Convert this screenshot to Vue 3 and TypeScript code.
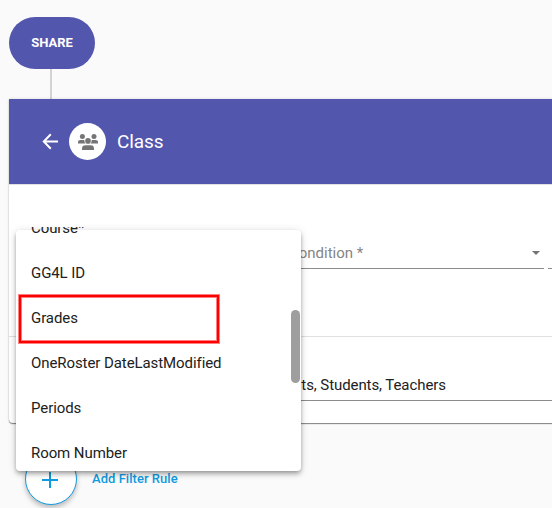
<script setup lang="ts">
const options: string[] = ['Course*', 'GG4L ID', 'Grades', 'OneRoster DateLastModified', 'Periods', 'Room Number']
</script>

<template>
  <main class="page">
    <button class="share">SHARE</button>
    <div class="connector"></div>
    <section class="card">
      <header class="card-header">
        <svg class="back" viewBox="0 0 17 17"><path d="M16 8.5H2M8.8 1.3 1.8 8.5 8.8 15.7" fill="none" stroke="#fff" stroke-width="2" /></svg>
        <span class="avatar">
          <svg width="20" height="16" viewBox="0 0 20 16" fill="#757575">
            <circle cx="4.4" cy="2.5" r="2.5" /><circle cx="16" cy="2.5" r="2.5" />
            <path d="M0 9.6V8.4Q0 6 2.6 6H5.6L6.4 6.3Q6.2 8.4 7.6 9.6ZM20 9.6V8.4Q20 6 17.4 6H14.4L13.6 6.3Q13.8 8.4 12.4 9.6Z" />
            <circle cx="10" cy="6.9" r="2.8" />
            <path d="M4 16V14.6Q4 11.2 7.5 11.2H12.5Q16 11.2 16 14.6V16Z" />
          </svg>
        </span>
        <h1>Class</h1>
      </header>
      <div class="rule-row">
        <div class="field condition"><span>Condition *</span><i class="caret"></i></div>
        <div class="field next"></div>
      </div>
      <div class="values-row"><div class="field values">Parents, Students, Teachers</div></div>
    </section>
    <div class="add-row">
      <button class="add"><svg width="16" height="16" viewBox="0 0 16 16"><path d="M8 0V16M0 8H16" stroke="#109be0" stroke-width="2" /></svg></button>
      <span class="add-label">Add Filter Rule</span>
    </div>
    <div class="menu">
      <ul>
        <li v-for="option in options" :key="option">{{ option }}</li>
      </ul>
      <div class="scroll-thumb"></div>
    </div>
    <div class="highlight"></div>
  </main>
</template>

<style>
body { background: #fafafa; overflow: hidden; }
</style>

<style scoped>
* { box-sizing: border-box; }
.page { position: relative; width: 552px; height: 508px; padding: 17px 0 0 9px; overflow: hidden; font: 15px Roboto, sans-serif; color: #212121; background: #fafafa; }
button { display: flex; align-items: center; justify-content: center; padding: 0; font-family: inherit; }
.share { width: 86px; height: 52px; padding-bottom: 1px; border: 0; border-radius: 26px; background: #5356ad; color: #fff; font-size: 13px; font-weight: 700; }
.connector { width: 2px; height: 30px; margin-left: 41px; background: #d3d3d3; }
.card { width: 560px; height: 324px; background: #fff; border-radius: 0 0 4px 4px; box-shadow: 0 1px 1px rgba(0,0,0,.45), 0 0 3px rgba(0,0,0,.15); }
.card-header { display: flex; align-items: center; height: 86px; padding-left: 33px; background: #5356ad; border-bottom: 1px solid #e0e0e0; }
.back { width: 17px; height: 17px; }
.avatar { display: flex; align-items: center; justify-content: center; width: 37px; height: 37px; margin-left: 10px; border-radius: 50%; background: #fff; }
h1 { margin: 0 0 0 11px; color: #fff; font-size: 19px; font-weight: 400; letter-spacing: -.1px; }
.rule-row { display: flex; gap: 4px; height: 152px; padding: 52px 0 0 280px; border-bottom: 1px solid #e0e0e0; }
.field { border-bottom: 1px solid #8c8c8c; }
.condition { display: flex; align-items: center; justify-content: space-between; width: 255px; height: 32px; padding-right: 4px; color: #858585; }
.caret { width: 0; height: 0; border: 4px solid transparent; border-top-color: #757575; border-bottom: 0; }
.next { width: 20px; height: 32px; }
.values-row { padding: 32px 0 0 16px; }
.values { height: 32px; padding-left: 238px; line-height: 32px; letter-spacing: -.08px; }
.add-row { display: flex; align-items: center; gap: 15px; margin: 30px 0 0 16px; color: #109be0; font-size: 13px; font-weight: 500; }
.add { width: 52px; height: 52px; padding: 2px 2px 0 0; border: 1px solid #109be0; border-radius: 50%; background: #fff; box-shadow: 0 3px 5px rgba(0,0,0,.25); }
.add-label { padding-bottom: 2px; letter-spacing: .04px; }
.menu { position: absolute; left: 16px; top: 230px; width: 285px; height: 241px; border-radius: 4px; background: #fff; box-shadow: 0 2px 4px -1px rgba(0,0,0,.3), 0 4px 5px rgba(0,0,0,.14), 0 1px 10px rgba(0,0,0,.12); }
ul { display: flex; flex-direction: column; justify-content: flex-end; height: 249px; margin: -3px 0 0; padding: 0; overflow: hidden; list-style: none; }
li { flex: none; height: 45px; padding-left: 15px; line-height: 45px; white-space: nowrap; letter-spacing: -.08px; }
.scroll-thumb { position: absolute; right: 1px; top: 80px; width: 9px; height: 73px; border-radius: 5px; background: #9e9e9e; }
.highlight { position: absolute; left: 19px; top: 295px; width: 200px; height: 48px; border: 2px solid #ff0000; box-shadow: 0 0 0 1px rgba(255,0,0,.5), inset 0 0 0 1px rgba(255,0,0,.5); }
</style>
